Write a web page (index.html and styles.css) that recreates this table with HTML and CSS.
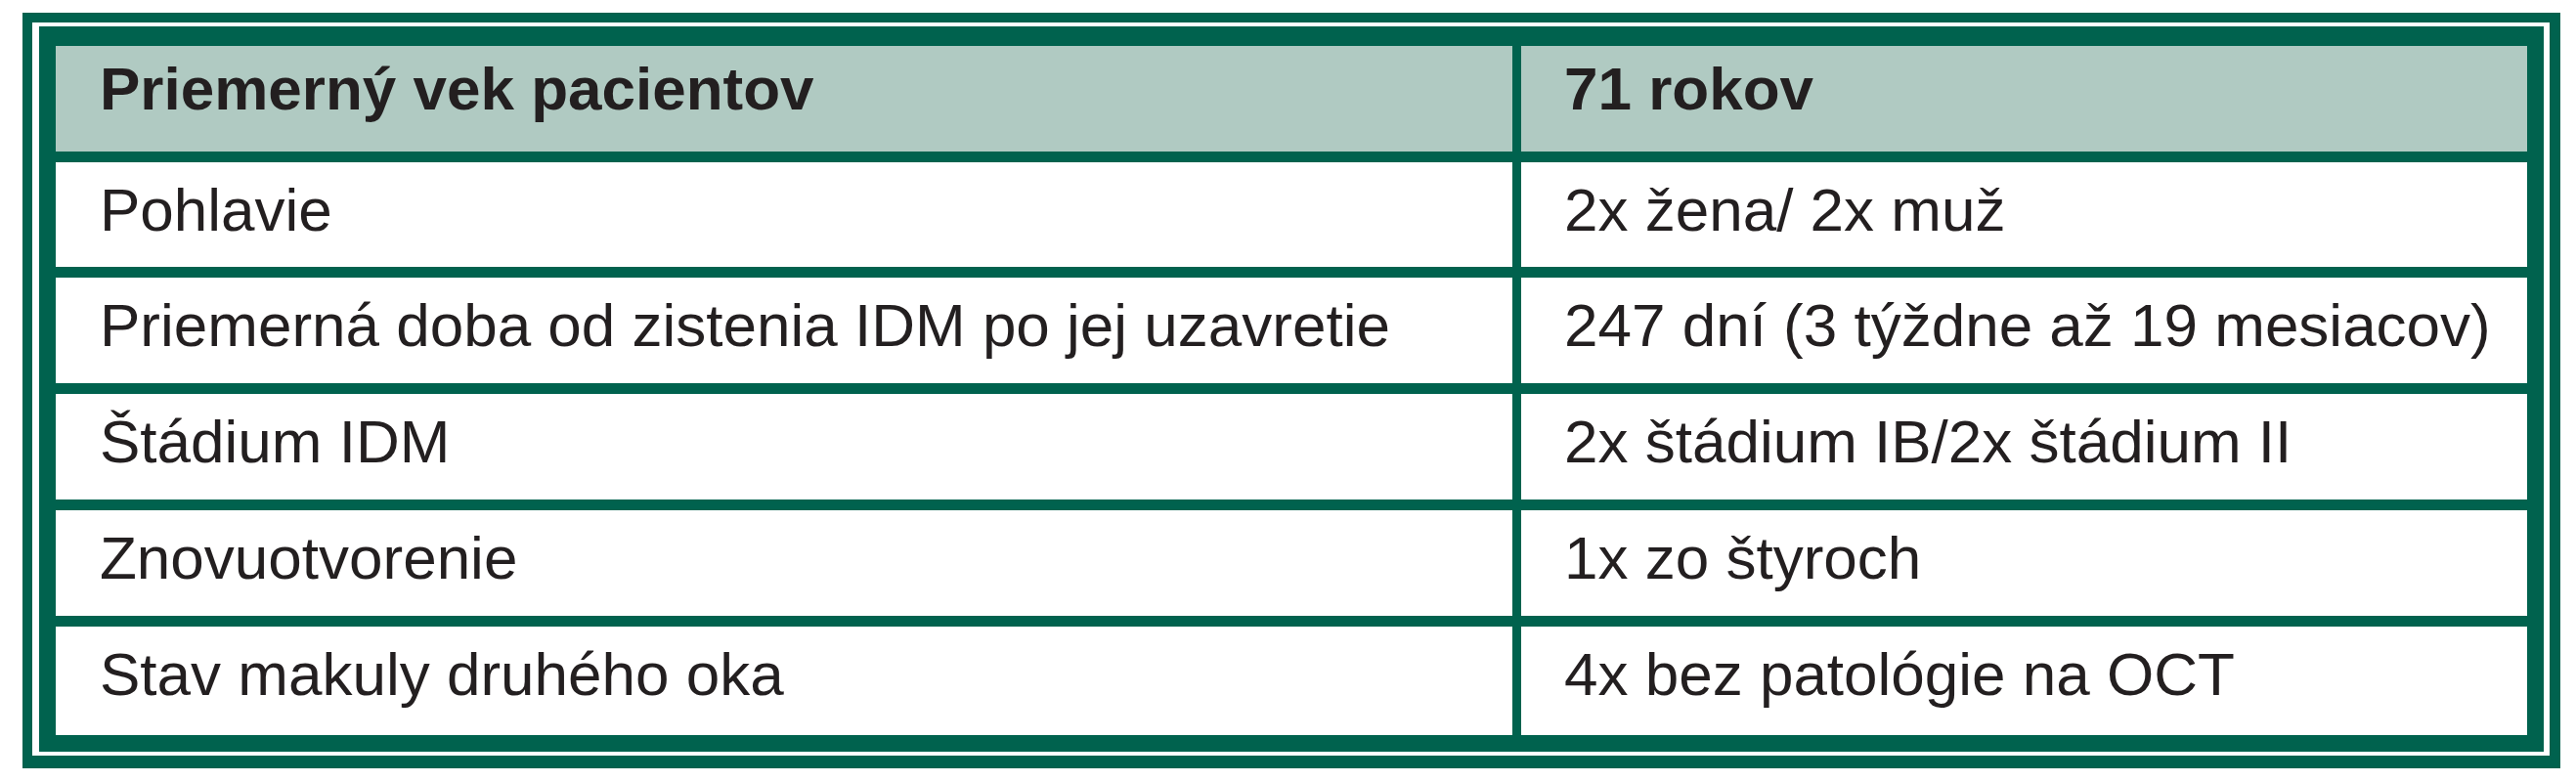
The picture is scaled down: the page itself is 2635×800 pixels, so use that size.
FILE: index.html
```html
<!DOCTYPE html>
<html lang="sk">
<head>
<meta charset="utf-8">
<title>Tabuľka</title>
<link rel="stylesheet" href="styles.css">
</head>
<body>
<div class="frame">
  <div class="grid">
    <div class="cell head">Priemerný vek pacientov</div>
    <div class="cell head col2">71 rokov</div>
    <div class="cell">Pohlavie</div>
    <div class="cell col2">2x žena/ 2x muž</div>
    <div class="cell">Priemerná doba od zistenia IDM po jej uzavretie</div>
    <div class="cell col2">247 dní (3 týždne až 19 mesiacov)</div>
    <div class="cell">Štádium IDM</div>
    <div class="cell col2">2x štádium IB/2x štádium II</div>
    <div class="cell">Znovuotvorenie</div>
    <div class="cell col2">1x zo štyroch</div>
    <div class="cell">Stav makuly druhého oka</div>
    <div class="cell col2">4x bez patológie na OCT</div>
  </div>
</div>
</body>
</html>
```

FILE: styles.css
```css
html, body {
  margin: 0;
  padding: 0;
  background: #ffffff;
}

body {
  font-family: "Liberation Sans", Arial, sans-serif;
  color: #231f20;
}

.frame {
  box-sizing: border-box;
  margin: 13px 0 0 23px;
  width: 2596px;
  height: 773px;
  border-style: solid;
  border-color: #00624e;
  border-width: 10px 11px 13px 10px;
  padding: 4px 6px 4px 7px;
  background: #ffffff;
}

.grid {
  box-sizing: border-box;
  height: 742px;
  background: #00624e;
  padding: 20px 17px 16px 17px;
  display: grid;
  grid-template-columns: 1490px 1fr;
  grid-template-rows: 108px 107px 108px 108px 108px 111px;
  column-gap: 9px;
  row-gap: 11px;
}

.cell {
  background: #ffffff;
  font-size: 62px;
  line-height: 71px;
  padding: 13px 0 0 45px;
  white-space: nowrap;
}

.cell.head {
  background: #b0cac2;
  font-weight: bold;
  padding-top: 8px;
}

.cell.col2 {
  padding-left: 44px;
}
```
